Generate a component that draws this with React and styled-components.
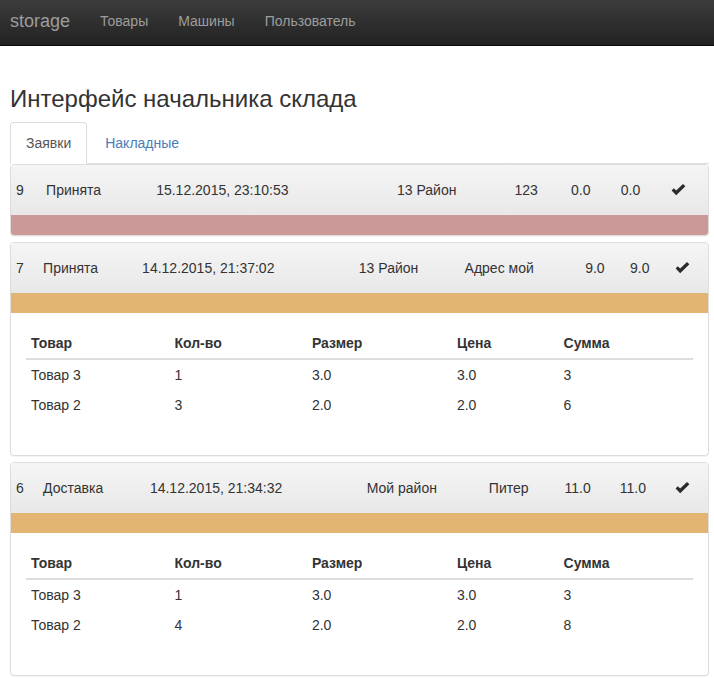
import React from "react";
import styled, { createGlobalStyle } from "styled-components";

const GlobalStyle = createGlobalStyle`
  html, body { margin: 0; padding: 0; background: #fff; }
  body {
    font-family: "Liberation Sans", Arial, Helvetica, sans-serif;
    font-size: 14px;
    line-height: 20px;
    color: #333;
  }
  * { box-sizing: border-box; }
`;

const Navbar = styled.nav`
  height: 46px;
  background: linear-gradient(to bottom, #3c3c3c 0%, #222 100%);
  border-bottom: 1px solid #080808;
  display: flex;
  align-items: stretch;
  padding-left: 10px;
  margin-bottom: 20px;
`;

const Brand = styled.a`
  font-size: 18px;
  line-height: 20px;
  color: #9d9d9d;
  padding: 11px 15px 0 0;
  text-decoration: none;
`;

const NavLink = styled.a`
  font-size: 14px;
  line-height: 20px;
  color: #9d9d9d;
  padding: 11px 15px 0;
  text-decoration: none;
`;

const Container = styled.main`
  display: flow-root;
  padding: 0 5px 0 10px;
`;

const Title = styled.h3`
  font-size: 24px;
  font-weight: 500;
  line-height: 1.1;
  margin: 20px 0 10px;
  color: #333;
`;

const Tabs = styled.ul`
  list-style: none;
  margin: 0;
  padding: 0;
  display: flex;
  border-bottom: 1px solid #ddd;
`;

const Tab = styled.li`
  margin-right: 2px;
  margin-bottom: -1px;
  padding: 10px 15px;
  border: 1px solid ${(p) => (p.$active ? "#ddd" : "transparent")};
  border-bottom-color: transparent;
  border-radius: 4px 4px 0 0;
  background: ${(p) => (p.$active ? "#fff" : "transparent")};
  color: ${(p) => (p.$active ? "#555" : "#4a7db8")};
  line-height: 20px;
`;

const Panel = styled.section`
  border: 1px solid #ddd;
  border-radius: 4px;
  box-shadow: 0 1px 1px rgba(0, 0, 0, 0.05);
  overflow: hidden;
  margin-bottom: 6px;
  background: #fff;
`;

const HeadingTable = styled.table`
  width: 100%;
  border-collapse: collapse;
  background: linear-gradient(to bottom, #f5f5f5 0%, #e8e8e8 100%);
  td {
    padding: 15px 5px;
    line-height: 20px;
    white-space: nowrap;
    color: #333;
  }
`;

const StatusBar = styled.div`
  height: 20px;
  background: ${(p) => (p.$tone === "danger" ? "#cc9999" : "#e3b573")};
`;

const PanelBody = styled.div`
  padding: 15px;
`;

const ItemsTable = styled.table`
  width: 100%;
  border-collapse: collapse;
  margin-bottom: 20px;
  th, td {
    padding: 5px;
    text-align: left;
    line-height: 20px;
    white-space: nowrap;
  }
  th {
    font-weight: bold;
    border-bottom: 2px solid #ddd;
  }
`;

const Check = () => (
  <svg width="15" height="12" viewBox="0 0 15 12" style={{ display: "block" }}>
    <path d="M0.6 6.4 L2.8 4.2 L5.2 6.6 L12 0 L14.4 2.3 L5.2 11.3 Z" fill="#2b2b2b" />
  </svg>
);

const orders = [
  {
    cells: ["9", "Принята", "15.12.2015, 23:10:53", "13 Район", "123", "0.0", "0.0"],
    tone: "danger",
    items: null,
  },
  {
    cells: ["7", "Принята", "14.12.2015, 21:37:02", "13 Район", "Адрес мой", "9.0", "9.0"],
    tone: "warning",
    items: [
      ["Товар 3", "1", "3.0", "3.0", "3"],
      ["Товар 2", "3", "2.0", "2.0", "6"],
    ],
  },
  {
    cells: ["6", "Доставка", "14.12.2015, 21:34:32", "Мой район", "Питер", "11.0", "11.0"],
    tone: "warning",
    items: [
      ["Товар 3", "1", "3.0", "3.0", "3"],
      ["Товар 2", "4", "2.0", "2.0", "8"],
    ],
  },
];

const cols = ["Товар", "Кол-во", "Размер", "Цена", "Сумма"];

export default function App() {
  return (
    <>
      <GlobalStyle />
      <Navbar>
        <Brand>storage</Brand>
        <NavLink>Товары</NavLink>
        <NavLink>Машины</NavLink>
        <NavLink>Пользователь</NavLink>
      </Navbar>
      <Container>
        <Title>Интерфейс начальника склада</Title>
        <Tabs>
          <Tab $active>Заявки</Tab>
          <Tab>Накладные</Tab>
        </Tabs>
        {orders.map((o, i) => (
          <Panel key={i}>
            <HeadingTable>
              <tbody>
                <tr>
                  {o.cells.map((c, j) => (
                    <td key={j}>{c}</td>
                  ))}
                  <td>
                    <Check />
                  </td>
                </tr>
              </tbody>
            </HeadingTable>
            <StatusBar $tone={o.tone} />
            {o.items && (
              <PanelBody>
                <ItemsTable>
                  <thead>
                    <tr>
                      {cols.map((c) => (
                        <th key={c}>{c}</th>
                      ))}
                    </tr>
                  </thead>
                  <tbody>
                    {o.items.map((r, k) => (
                      <tr key={k}>
                        {r.map((v, m) => (
                          <td key={m}>{v}</td>
                        ))}
                      </tr>
                    ))}
                  </tbody>
                </ItemsTable>
              </PanelBody>
            )}
          </Panel>
        ))}
      </Container>
    </>
  );
}
